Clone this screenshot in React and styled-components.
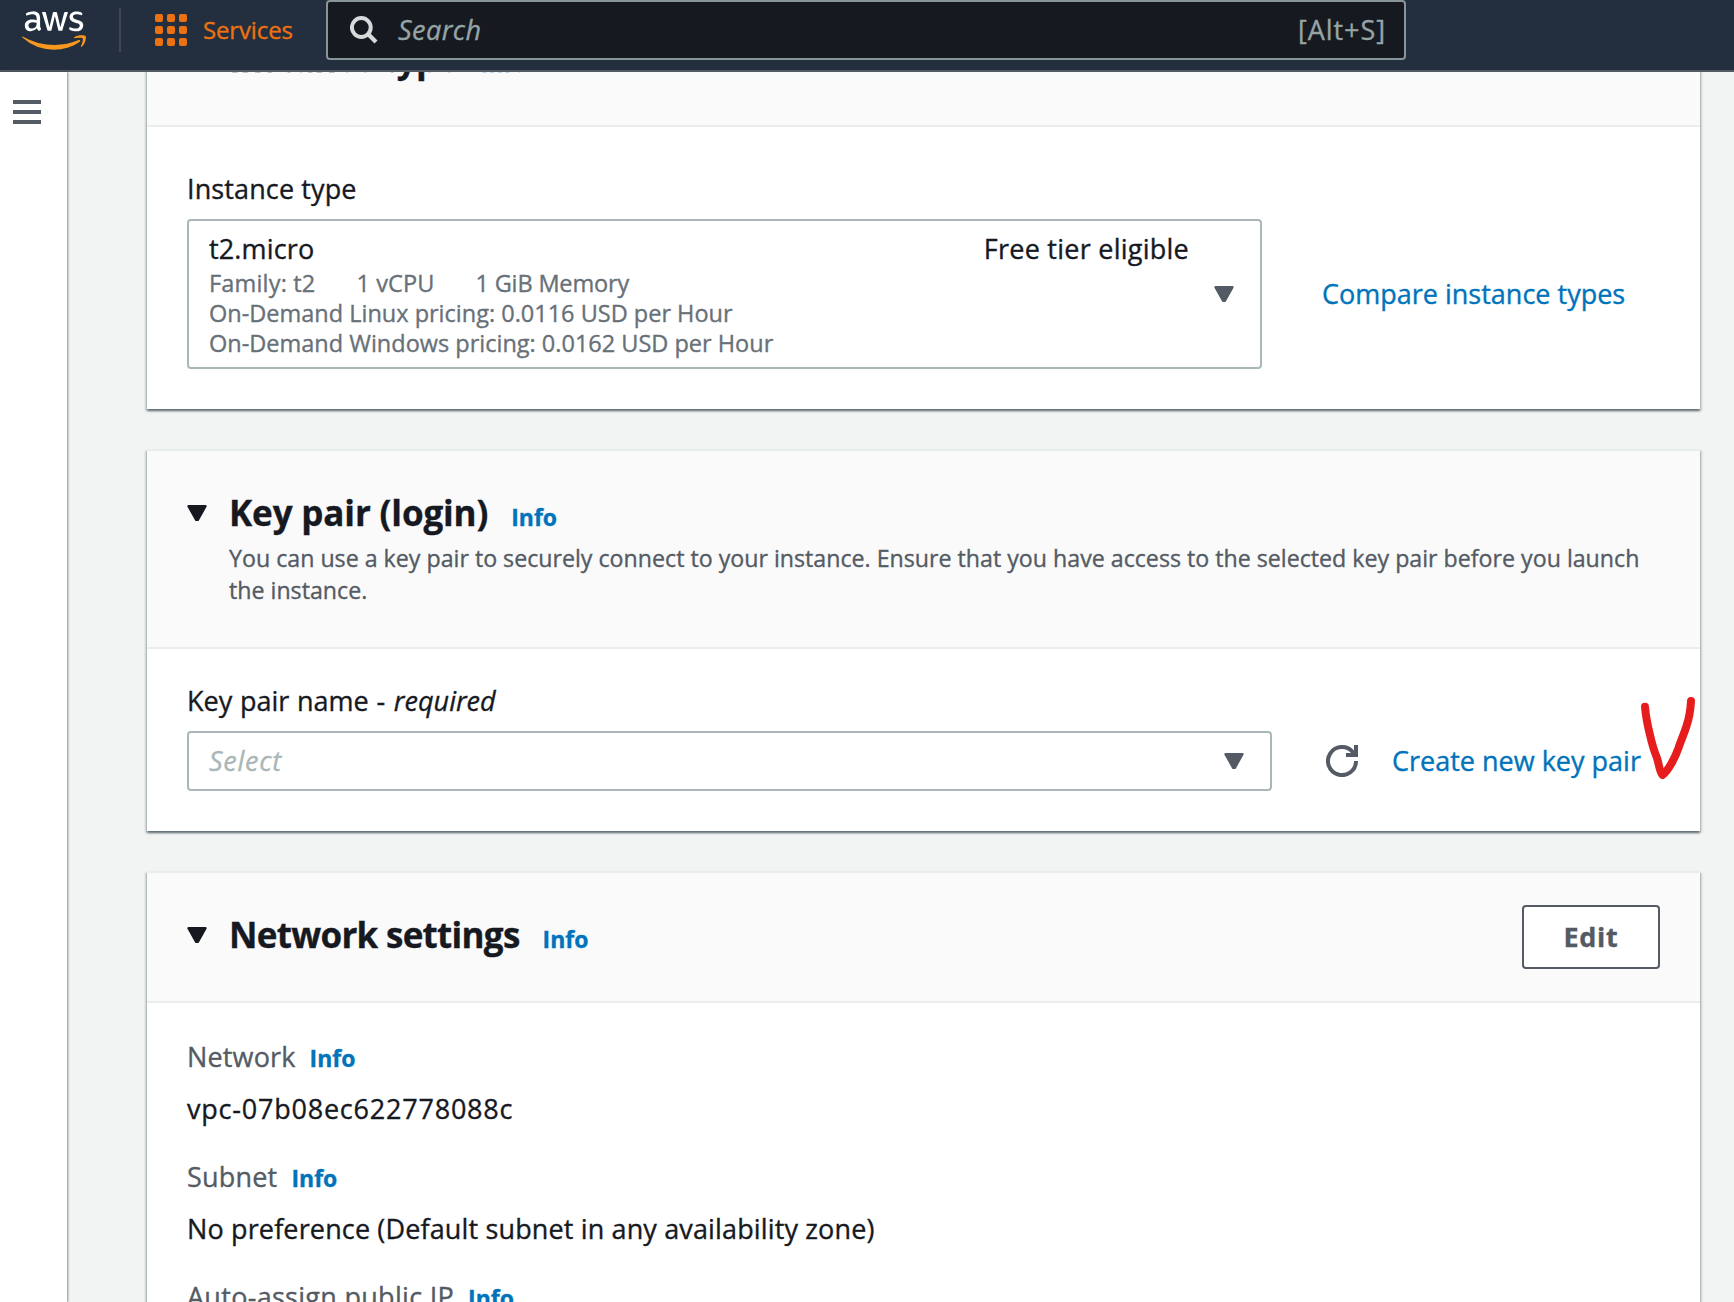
import React from "react";
import styled, { createGlobalStyle, css } from "styled-components";
import { FaAws } from "react-icons/fa";

const GlobalStyle = createGlobalStyle`
  * { box-sizing: border-box; }
  html, body { margin: 0; padding: 0; }
  body {
    background: #f2f3f3;
    color: #16191f;
    font-family: "Open Sans", "Noto Sans", sans-serif;
    font-size: 27px;
    line-height: 40px;
    overflow: hidden;
    -webkit-text-stroke: 0.35px currentColor;
  }
`;

const Page = styled.div`
  display: flex;
  flex-direction: column;
  width: 1734px;
  height: 1302px;
  overflow: hidden;
`;

const NavBar = styled.header`
  display: flex;
  align-items: flex-start;
  flex: 0 0 72px;
  background: #232f3e;
  border-bottom: 2px solid #545b64;
  padding-left: 22px;
`;

const Logo = styled(FaAws)`
  width: 64px;
  height: 51px;
  margin-top: 4.5px;
  fill: url(#aws-logo-fill);
`;

const HiddenDefs = styled.svg`
  width: 0;
  height: 0;
`;

const NavDivider = styled.span`
  width: 2px;
  height: 44px;
  margin: 8px 34px 0 33px;
  background: #414750;
`;

const ServicesButton = styled.button`
  display: flex;
  align-items: center;
  gap: 16px;
  width: 171px;
  height: 60px;
  padding: 0;
  border: 0;
  background: none;
  color: #ec7211;
  font: inherit;
  font-size: 24px;
`;

const AppsGrid = styled.span`
  display: grid;
  grid-template-columns: repeat(3, 8px);
  grid-auto-rows: 8px;
  gap: 4px;
`;

const AppsDot = styled.i`
  border-radius: 2px;
  background: #ec7211;
`;

const SearchBox = styled.div`
  display: flex;
  align-items: center;
  width: 1080px;
  height: 60px;
  padding: 0 18px 0 22px;
  border: 2px solid #879596;
  border-radius: 4px;
  background: #16191f;
  color: #95a5a6;
`;

const SearchHint = styled.span`
  flex: 1;
  margin-left: 20px;
  font-style: italic;
  letter-spacing: 0.45px;
`;

const Shortcut = styled.span`
  letter-spacing: 0.95px;
`;

const Workspace = styled.div`
  display: flex;
  flex: 1;
  min-height: 0;
`;

const SideRail = styled.aside`
  position: relative;
  z-index: 1;
  flex: 0 0 67px;
  padding: 28px 0 0 13px;
  background: #fff;
  box-shadow: 1px 0 2px 0 rgba(0, 28, 36, 0.45);
`;

const MenuIcon = styled.div`
  display: grid;
  gap: 6px;
  width: 28px;
`;

const MenuLine = styled.span`
  height: 4px;
  background: #545b64;
`;

const Backdrop = styled.div`
  flex: 1;
  min-width: 0;
  display: flex;
  overflow: hidden;
  background: #f2f3f3;
`;

const Main = styled.main`
  display: flex;
  flex-direction: column;
  gap: 40px;
  flex: 1;
  min-width: 0;
  margin: -77px 34px 0 80px;
`;

const Card = styled.section`
  position: relative;
  flex: none;
  background: #fff;
  box-shadow: 0 2px 2px 0 rgba(0, 28, 36, 0.5), 2px 2px 2px 0 rgba(0, 28, 36, 0.12),
    -2px 2px 2px 0 rgba(0, 28, 36, 0.12);
`;

const CardHeader = styled.div`
  display: grid;
  grid-template-columns: 42px minmax(0, 1fr) auto;
  padding: 40px 40px ${(p) => (p.$described ? "41px" : "44px")};
  border-top: 2px solid #eaeded;
  border-bottom: 2px solid #eaeded;
  background: #fafafa;
`;

const HeaderCaret = styled.div`
  height: 44px;
  padding-top: 14px;
  line-height: 0;
`;

const TitleLine = styled.div`
  display: flex;
  align-items: baseline;
  height: 44px;
`;

const Title = styled.h2`
  margin: 0 23px 0 0;
  font-size: 35px;
  line-height: 44px;
  font-weight: 700;
  letter-spacing: ${(p) => p.$track || 0}px;
`;

const Description = styled.p`
  margin: 7px 0 0;
  font-size: 23.2px;
  line-height: 32px;
  white-space: nowrap;
  color: #545b64;
`;

const CardBody = styled.div`
  padding: ${(p) => p.$top}px 40px 40px;
`;

const linkColor = css`
  color: #0073bb;
  text-decoration: none;
`;

const InfoLink = styled.a`
  ${linkColor}
  font-size: 23px;
  font-weight: 700;
`;

const ActionLink = styled.a`
  ${linkColor}
  white-space: nowrap;
`;

const Text = styled.span`
  white-space: nowrap;
  letter-spacing: ${(p) => p.$track || 0}px;
`;

const Label = styled.div`
  margin-bottom: 10px;
`;

const NameText = styled(Text)`
  word-spacing: 0.7px;
`;

const Required = styled.em`
  margin-left: 1px;
`;

const FieldRow = styled.div`
  display: flex;
  align-items: center;
`;

const Select = styled.div`
  display: flex;
  align-items: center;
  justify-content: space-between;
  width: ${(p) => p.$width}px;
  height: ${(p) => p.$height}px;
  margin-right: ${(p) => p.$after}px;
  padding: 0 26px 0 20px;
  border: 2px solid #aab7b8;
  border-radius: 4px;
  background: #fff;
`;

const Option = styled.div`
  width: 980px;
`;

const OptionHead = styled.div`
  display: flex;
  justify-content: space-between;
  margin-bottom: 2px;
  line-height: 35px;
`;

const OptionMeta = styled.div`
  display: flex;
  gap: 41px;
  color: #687078;
  font-size: 23.5px;
  line-height: 30px;
`;

const Placeholder = styled(Text)`
  color: #aab7b8;
  font-style: italic;
`;

const RefreshButton = styled.button`
  width: 32px;
  height: 32px;
  margin-right: 34px;
  padding: 0;
  border: 0;
  background: none;
  line-height: 0;
`;

const EditButton = styled.button`
  width: 138px;
  height: 64px;
  margin: -8px 0 -12px;
  border: 2px solid #545b64;
  border-radius: 4px;
  background: #fff;
  color: #545b64;
  font: inherit;
  font-weight: 700;
  letter-spacing: 0.7px;
`;

const Setting = styled.dl`
  margin: 0 0 28px;
`;

const SettingName = styled.dt`
  display: flex;
  align-items: baseline;
  gap: 14px;
  height: 40px;
  color: #545b64;
`;

const SettingValue = styled.dd`
  margin: 12px 0 0;
`;

const PenMark = styled.svg`
  position: absolute;
  left: 1490px;
  top: 244px;
  width: 60px;
  height: 90px;
`;

function Caret({ color }) {
  return (
    <svg width="20" height="16" viewBox="0 0 20 16">
      <path
        d="M1.5 1.2 H18.5 L10.8 14.8 H9.2 Z"
        fill={color}
        stroke={color}
        strokeWidth="2.4"
        strokeLinejoin="round"
      />
    </svg>
  );
}

function SearchIcon() {
  return (
    <svg width="28" height="28" viewBox="0 0 28 28" fill="none" stroke="#d5dbdb" strokeWidth="4">
      <circle cx="11.3" cy="11.5" r="9.4" />
      <path d="M18 18 L26 26" strokeWidth="4.2" />
    </svg>
  );
}

function RefreshIcon() {
  return (
    <svg width="32" height="32" viewBox="0 0 32 32" fill="none" stroke="#545b64" strokeWidth="4">
      <path d="M30 16 A14 14 0 1 1 26.5 6.8 L29 10" />
      <path d="M30 0 V10 H20" />
    </svg>
  );
}

function SectionHeader({ title, track, described, children, action }) {
  return (
    <CardHeader $described={described}>
      <HeaderCaret>
        <Caret color="#16191f" />
      </HeaderCaret>
      <div>
        <TitleLine>
          <Title $track={track}>{title}</Title>
          <InfoLink>Info</InfoLink>
        </TitleLine>
        {children}
      </div>
      {action}
    </CardHeader>
  );
}

function SettingItem({ name, nameTrack, value, valueTrack }) {
  return (
    <Setting>
      <SettingName>
        <Text $track={nameTrack}>{name}</Text>
        <InfoLink>Info</InfoLink>
      </SettingName>
      {value && (
        <SettingValue>
          <Text $track={valueTrack}>{value}</Text>
        </SettingValue>
      )}
    </Setting>
  );
}

export default function App() {
  return (
    <Page>
      <GlobalStyle />
      <NavBar>
        <HiddenDefs>
          <linearGradient id="aws-logo-fill" gradientUnits="userSpaceOnUse" x1="0" y1="0" x2="0" y2="512">
            <stop offset="0.56" stopColor="#fff" />
            <stop offset="0.56" stopColor="#f8981d" />
          </linearGradient>
        </HiddenDefs>
        <Logo />
        <NavDivider />
        <ServicesButton>
          <AppsGrid>
            {Array.from({ length: 9 }, (_, i) => (
              <AppsDot key={i} />
            ))}
          </AppsGrid>
          <Text $track={-0.14}>Services</Text>
        </ServicesButton>
        <SearchBox>
          <SearchIcon />
          <SearchHint>Search</SearchHint>
          <Shortcut>[Alt+S]</Shortcut>
        </SearchBox>
      </NavBar>
      <Workspace>
        <SideRail>
          <MenuIcon>
            <MenuLine />
            <MenuLine />
            <MenuLine />
          </MenuIcon>
        </SideRail>
        <Backdrop>
          <Main>
            <Card>
              <SectionHeader title="Instance type" track={-0.65} />
              <CardBody $top={42}>
                <Label>
                  <Text $track={0.12}>Instance type</Text>
                </Label>
                <FieldRow>
                  <Select $width={1075} $height={150} $after={60}>
                    <Option>
                      <OptionHead>
                        <Text $track={0.14}>t2.micro</Text>
                        <Text $track={0.25}>Free tier eligible</Text>
                      </OptionHead>
                      <OptionMeta>
                        <Text $track={0.18}>Family: t2</Text>
                        <Text $track={0.1}>1 vCPU</Text>
                        <Text $track={-0.15}>1 GiB Memory</Text>
                      </OptionMeta>
                      <OptionMeta>
                        <Text>On-Demand Linux pricing: 0.0116 USD per Hour</Text>
                      </OptionMeta>
                      <OptionMeta>
                        <Text>On-Demand Windows pricing: 0.0162 USD per Hour</Text>
                      </OptionMeta>
                    </Option>
                    <Caret color="#545b64" />
                  </Select>
                  <ActionLink>Compare instance types</ActionLink>
                </FieldRow>
              </CardBody>
            </Card>
            <Card>
              <SectionHeader title="Key pair (login)" track={-0.14} described>
                <Description>
                  You can use a key pair to securely connect to your instance. Ensure that you have
                  access to the selected key pair before you launch
                  <br />
                  the instance.
                </Description>
              </SectionHeader>
              <CardBody $top={32}>
                <Label>
                  <NameText>
                    Key pair name - <Required>required</Required>
                  </NameText>
                </Label>
                <FieldRow>
                  <Select $width={1085} $height={60} $after={54}>
                    <Placeholder $track={0.75}>Select</Placeholder>
                    <Caret color="#545b64" />
                  </Select>
                  <RefreshButton>
                    <RefreshIcon />
                  </RefreshButton>
                  <ActionLink>Create new key pair</ActionLink>
                </FieldRow>
              </CardBody>
              <PenMark viewBox="0 0 60 90">
                <path
                  d="M8 13.7 C9 26 11 34 13 42 C15 51 17.5 59 20 65 C22 71 22.5 79 25.5 82 C31 78 38 65 41.5 55 C43 50 47 41 49.5 33 C52.5 24 53.5 18 54 8"
                  fill="none"
                  stroke="#e71d1d"
                  strokeWidth="8"
                  strokeLinecap="round"
                  strokeLinejoin="round"
                />
              </PenMark>
            </Card>
            <Card>
              <SectionHeader
                title="Network settings"
                track={-0.71}
                action={<EditButton>Edit</EditButton>}
              />
              <CardBody $top={34}>
                <SettingItem
                  name="Network"
                  nameTrack={0.15}
                  value="vpc-07b08ec622778088c"
                  valueTrack={0.78}
                />
                <SettingItem
                  name="Subnet"
                  nameTrack={0.2}
                  value="No preference (Default subnet in any availability zone)"
                  valueTrack={0.14}
                />
                <SettingItem name="Auto-assign public IP" nameTrack={0.29} />
              </CardBody>
            </Card>
          </Main>
        </Backdrop>
      </Workspace>
    </Page>
  );
}
